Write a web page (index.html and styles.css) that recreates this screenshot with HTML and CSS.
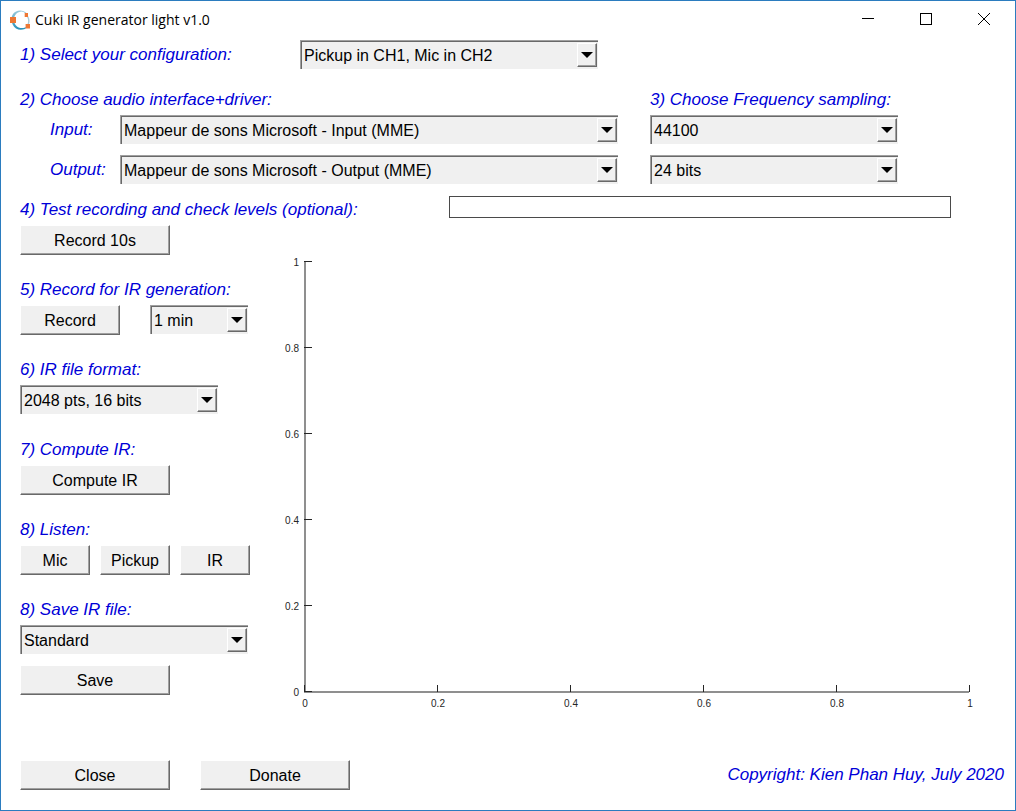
FILE: index.html
```html
<!DOCTYPE html>
<html lang="en">
<head>
<meta charset="utf-8">
<title>Cuki IR generator light v1.0</title>
<link rel="stylesheet" href="styles.css">
</head>
<body>
<svg class="defs" aria-hidden="true">
  <symbol id="arrow" viewBox="0 0 12 6"><path d="M0 0H12L6 6Z"/></symbol>
</svg>
<div class="window">
  <header class="titlebar">
    <svg class="logo" viewBox="0 0 20 20" aria-hidden="true">
      <defs>
        <linearGradient id="ring" x1="0" y1="0" x2="0" y2="1">
          <stop offset="0" stop-color="#9ccbdc"/>
          <stop offset="1" stop-color="#2490ba"/>
        </linearGradient>
      </defs>
      <path d="M17.600 6.500C19.300 9.500 19.200 12 18 15" fill="none" stroke="#a9cbd8" stroke-width="1.400"/>
      <path d="M17 3.500C13-.8 6-.5 3 4 .2 8.500 1.500 15.500 6 18.500 10 21 15.500 20 18 16 14 19 9 18.800 6 15.500 3 12 3.200 6 7 3 10 .8 13.500 1 15.500 3.500Z" fill="url(#ring)"/>
      <path d="M0 7H6V13H0ZM14.700 3H18V7H14.700ZM15.600 14H20V18.500H15.600Z" fill="#ee7733"/>
    </svg>
    <h1 class="title">Cuki IR generator light v1.0</h1>
    <div class="window-buttons">
      <button type="button" class="window-button" aria-label="Minimize"><svg viewBox="0 0 14 14"><path d="M1 6H13V7H1Z"/></svg></button>
      <button type="button" class="window-button" aria-label="Maximize"><svg viewBox="0 0 14 14"><path fill-rule="evenodd" d="M1 1H13V13H1ZM2 2V12H12V2Z"/></svg></button>
      <button type="button" class="window-button" aria-label="Close window"><svg viewBox="0 0 14 14"><path d="M1 1L13 13M13 1L1 13" fill="none" stroke="#000" stroke-width="1"/></svg></button>
    </div>
  </header>

  <main class="content">
    <div class="config">
      <label class="caption" for="config">1) Select your configuration:</label>
      <div class="combo combo-config"><select id="config"><option>Pickup in CH1, Mic in CH2</option></select><span class="drop"><svg><use href="#arrow"/></svg></span></div>
    </div>

    <div class="audio">
      <section class="devices">
        <h2 class="caption">2) Choose audio interface+driver:</h2>
        <div class="device">
          <label class="caption" for="input">Input:</label>
          <div class="combo"><select id="input"><option>Mappeur de sons Microsoft - Input (MME)</option></select><span class="drop"><svg><use href="#arrow"/></svg></span></div>
        </div>
        <div class="device">
          <label class="caption" for="output">Output:</label>
          <div class="combo"><select id="output"><option>Mappeur de sons Microsoft - Output (MME)</option></select><span class="drop"><svg><use href="#arrow"/></svg></span></div>
        </div>
      </section>
      <section class="sampling">
        <h2 class="caption">3) Choose Frequency sampling:</h2>
        <div class="combo"><select aria-label="Sampling frequency"><option>44100</option></select><span class="drop"><svg><use href="#arrow"/></svg></span></div>
        <div class="combo"><select aria-label="Bit depth"><option>24 bits</option></select><span class="drop"><svg><use href="#arrow"/></svg></span></div>
      </section>
    </div>

    <div class="levels">
      <h2 class="caption">4) Test recording and check levels (optional):</h2>
      <div class="meter" role="img" aria-label="Recording level"></div>
    </div>

    <div class="workspace">
      <div class="steps">
        <button type="button" class="push">Record 10s</button>
        <section class="step">
          <h2 class="caption">5) Record for IR generation:</h2>
          <div class="record">
            <button type="button" class="push push-medium">Record</button>
            <div class="combo combo-short"><select aria-label="Recording length"><option>1 min</option></select><span class="drop"><svg><use href="#arrow"/></svg></span></div>
          </div>
        </section>
        <section class="step">
          <label class="caption" for="format">6) IR file format:</label>
          <div class="combo combo-format"><select id="format"><option>2048 pts, 16 bits</option></select><span class="drop"><svg><use href="#arrow"/></svg></span></div>
        </section>
        <section class="step">
          <h2 class="caption">7) Compute IR:</h2>
          <button type="button" class="push">Compute IR</button>
        </section>
        <section class="step">
          <h2 class="caption">8) Listen:</h2>
          <div class="listen">
            <button type="button" class="push push-small">Mic</button>
            <button type="button" class="push push-small">Pickup</button>
            <button type="button" class="push push-small">IR</button>
          </div>
        </section>
        <section class="step">
          <label class="caption" for="save-format">8) Save IR file:</label>
          <div class="combo combo-save"><select id="save-format"><option>Standard</option></select><span class="drop"><svg><use href="#arrow"/></svg></span></div>
          <button type="button" class="push push-save">Save</button>
        </section>
      </div>

      <div class="plot">
        <svg class="axes" role="img" aria-label="Impulse response axes">
          <g class="axis">
            <rect width="2" height="100%"/>
            <rect y="100%" width="100%" height="2"/>
          </g>
          <g class="ticks">
            <rect y="0%" width="8" height="1"/>
            <rect y="20%" width="8" height="1"/>
            <rect y="40%" width="8" height="1"/>
            <rect y="60%" width="8" height="1"/>
            <rect y="80%" width="8" height="1"/>
            <rect y="100%" width="8" height="1"/>
          </g>
          <svg class="ticks" y="100%">
            <rect x="0%" y="-6" width="1" height="7"/>
            <rect x="20%" y="-6" width="1" height="7"/>
            <rect x="40%" y="-6" width="1" height="7"/>
            <rect x="60%" y="-6" width="1" height="7"/>
            <rect x="80%" y="-6" width="1" height="7"/>
            <rect x="100%" y="-6" width="1" height="7"/>
          </svg>
          <g class="labels-y">
            <text x="-5" y="0%" dy="5">1</text>
            <text x="-5" y="20%" dy="5">0.8</text>
            <text x="-5" y="40%" dy="5">0.6</text>
            <text x="-5" y="60%" dy="5">0.4</text>
            <text x="-5" y="80%" dy="5">0.2</text>
            <text x="-5" y="100%" dy="5">0</text>
          </g>
          <g class="labels-x">
            <text x="0%" y="100%" dx="1" dy="16">0</text>
            <text x="20%" y="100%" dx="1" dy="16">0.2</text>
            <text x="40%" y="100%" dx="1" dy="16">0.4</text>
            <text x="60%" y="100%" dx="1" dy="16">0.6</text>
            <text x="80%" y="100%" dx="1" dy="16">0.8</text>
            <text x="100%" y="100%" dx="1" dy="16">1</text>
          </g>
        </svg>
      </div>
    </div>
  </main>

  <footer class="footer">
    <button type="button" class="push">Close</button>
    <button type="button" class="push">Donate</button>
    <p class="caption copyright">Copyright: Kien Phan Huy, July 2020</p>
  </footer>
</div>
</body>
</html>
```

FILE: styles.css
```css
* {
  box-sizing: border-box;
}

body {
  margin: 0;
  background: #fff;
  color: #000;
  font: 16px/30px "Liberation Sans", Arial, sans-serif;
}

.defs {
  position: absolute;
  width: 0;
  height: 0;
}

.window {
  display: flex;
  flex-direction: column;
  min-height: 100vh;
  padding-bottom: 20px;
  border: 1px solid #2b7cbf;
}

.titlebar {
  display: flex;
  align-items: center;
  height: 37px;
  padding: 0 2px 0 9px;
}

.logo {
  width: 20px;
  height: 20px;
}

.title {
  margin: 0 auto 0 5px;
  font: 400 14px/20px "Open Sans", "Segoe UI", sans-serif;
}

.window-buttons {
  display: flex;
}

.window-button {
  display: grid;
  place-items: center;
  width: 58px;
  height: 36px;
  padding: 0 0 2px;
  border: 0;
  background: transparent;
}

.window-button svg {
  width: 14px;
  height: 14px;
}

.content {
  display: flex;
  flex: 1;
  flex-direction: column;
  padding: 2px 19px 0;
}

.caption {
  height: 30px;
  margin: 0;
  color: #0000d8;
  font-size: 17px;
  font-style: italic;
  font-weight: 400;
  line-height: 30px;
  white-space: nowrap;
}

.config {
  display: grid;
  grid-template-columns: 280px auto;
  justify-content: start;
  height: 30px;
}

.combo {
  display: grid;
  grid-template-columns: 1fr 21px;
  height: 29px;
  border-top: 1px solid #a0a0a0;
  border-left: 1px solid #a0a0a0;
}

.combo select {
  grid-area: 1 / 1 / 2 / 3;
  min-width: 0;
  margin: 0;
  padding: 0 22px 0 2px;
  border: 0 solid #696969;
  border-width: 1px 0 0 1px;
  border-radius: 0;
  background: #f0f0f0;
  color: #000;
  font: inherit;
  line-height: 27px;
  appearance: none;
}

.drop {
  display: grid;
  grid-area: 1 / 2;
  place-items: center;
  height: 24px;
  width: 20px;
  margin-top: 2px;
  border: 1px solid;
  border-color: #fff #696969 #696969 #fff;
  background: #f0f0f0;
  box-shadow: inset -1px -1px #a0a0a0;
  pointer-events: none;
}

.drop svg {
  display: block;
  width: 12px;
  height: 6px;
}

.combo-config { width: 298px; }
.combo-short { width: 98px; }
.combo-format { width: 198px; }
.combo-save { width: 228px; }

.audio {
  display: grid;
  grid-template-columns: minmax(0, 598fr) minmax(0, 248fr);
  column-gap: 32px;
  margin: 15px 98px 0 0;
}

.devices,
.sampling {
  display: grid;
  grid-template-rows: 30px 40px 40px;
}

.device {
  display: grid;
  grid-template-columns: 70px 1fr;
  padding-left: 30px;
}

.levels {
  display: grid;
  grid-template-columns: 429px 1fr;
}

.meter {
  height: 22px;
  margin: 1px 45px 0 0;
  border: 1px solid #4a4a4a;
}

.workspace {
  display: grid;
  grid-template-columns: 230px 1fr;
  flex: 1;
}

.push {
  width: 150px;
  height: 30px;
  padding: 2px 0 0;
  border: 1px solid;
  border-color: #fff #696969 #696969 #fff;
  background: #f0f0f0;
  box-shadow: inset -1px -1px #a0a0a0;
  color: #000;
  font: inherit;
  line-height: 26px;
}

.push-medium { width: 100px; }
.push-small { width: 70px; }

.push-save {
  margin-top: 11px;
}

.steps {
  display: flex;
  flex-direction: column;
  align-items: flex-start;
  gap: 20px;
}

.step {
  display: flex;
  flex-direction: column;
  min-height: 60px;
}

.record {
  display: flex;
  gap: 30px;
}

.listen {
  display: flex;
  gap: 10px;
}

.plot {
  display: grid;
  padding: 36px 27px 4px 54px;
}

.axes {
  width: 100%;
  height: 100%;
  overflow: visible;
  font-size: 10px;
  fill: #262626;
}

.axes svg {
  overflow: visible;
}

.axis {
  fill: #8f8f8f;
}

.labels-y {
  text-anchor: end;
}

.labels-x {
  text-anchor: middle;
}

.footer {
  display: flex;
  gap: 30px;
  margin-top: 65px;
  padding: 0 11px 0 19px;
}

.copyright {
  margin-left: auto;
}
```
